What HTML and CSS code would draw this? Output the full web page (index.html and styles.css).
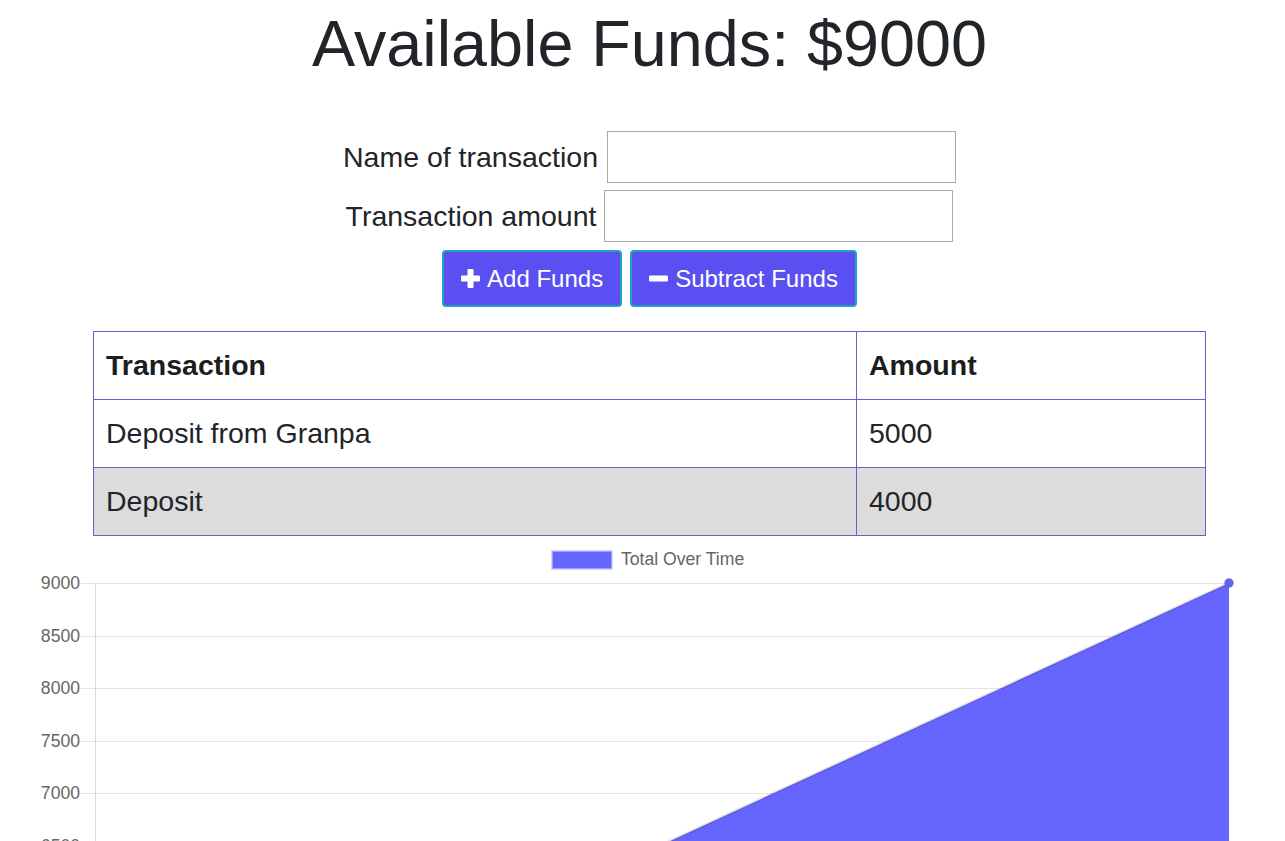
FILE: index.html
```html
<!DOCTYPE html>
<html lang="en">
<head>
<meta charset="utf-8">
<title>Budget Tracker</title>
<link rel="stylesheet" href="styles.css">
</head>
<body>
<div class="page">
  <h1 class="title">Available Funds: $9000</h1>
  <form class="form">
    <div class="form-row">
      <label class="label" for="t-name">Name of transaction</label>
      <input class="input" id="t-name" type="text">
    </div>
    <div class="form-row narrow">
      <label class="label" for="t-amount">Transaction amount</label>
      <input class="input" id="t-amount" type="number">
    </div>
    <div class="btn-row">
      <button type="button" class="btn">
        <svg class="ico" width="19" height="19" viewBox="0 0 19 19"><rect x="6.5" y="0" width="6" height="19" rx="1.2" fill="#fff"/><rect x="0" y="6.5" width="19" height="6" rx="1.2" fill="#fff"/></svg>
        <span>Add Funds</span>
      </button>
      <button type="button" class="btn">
        <svg class="ico" width="19" height="19" viewBox="0 0 19 19"><rect x="0" y="6.5" width="19" height="6" rx="1.2" fill="#fff"/></svg>
        <span>Subtract Funds</span>
      </button>
    </div>
  </form>
  <table class="table">
    <thead>
      <tr><th class="col-a">Transaction</th><th class="col-b">Amount</th></tr>
    </thead>
    <tbody>
      <tr><td>Deposit from Granpa</td><td>5000</td></tr>
      <tr class="alt"><td>Deposit</td><td>4000</td></tr>
    </tbody>
  </table>
</div>
<div class="chart">
  <svg class="chart-svg" width="1285" height="330" viewBox="0 0 1285 330">
    <rect x="552.5" y="15.5" width="59" height="17" fill="#6666ff" stroke="rgba(102,102,255,0.25)" stroke-width="3"/>
    <text x="621" y="29" class="legend">Total Over Time</text>
    <g stroke="#e5e5e5" stroke-width="1">
      <line x1="81" y1="47.5" x2="1229" y2="47.5"/>
      <line x1="81" y1="100.5" x2="1229" y2="100.5"/>
      <line x1="81" y1="152.5" x2="1229" y2="152.5"/>
      <line x1="81" y1="205.5" x2="1229" y2="205.5"/>
      <line x1="81" y1="257.5" x2="1229" y2="257.5"/>
      <line x1="81" y1="310.5" x2="1229" y2="310.5"/>
    </g>
    <line x1="95.5" y1="47" x2="95.5" y2="330" stroke="#d9d9d9" stroke-width="1"/>
    <g class="ticks">
      <text x="80" y="53">9000</text>
      <text x="80" y="106">8500</text>
      <text x="80" y="158">8000</text>
      <text x="80" y="211">7500</text>
      <text x="80" y="263">7000</text>
      <text x="80" y="316">6500</text>
    </g>
    <polygon points="1229,47 616,330 1229,330" fill="#6666ff"/>
    <line x1="1229" y1="47" x2="616" y2="330" stroke="rgba(0,0,0,0.1)" stroke-width="3"/>
    <circle cx="1229" cy="47" r="4.5" fill="#6363f2" stroke="rgba(0,0,0,0.1)" stroke-width="1"/>
  </svg>
</div>
</body>
</html>
```

FILE: styles.css
```css
html, body {
  margin: 0;
  padding: 0;
  background: #fff;
}

body {
  font-family: "Liberation Sans", Arial, sans-serif;
  color: #212529;
  overflow-x: hidden;
}

.page {
  padding-left: 14px;
}

.title {
  margin: 5px 0 0;
  font-size: 64.7px;
  font-weight: 400;
  line-height: 78px;
  text-align: center;
  color: #212529;
}

.form {
  margin-top: 48px;
  display: flex;
  flex-direction: column;
  align-items: center;
  gap: 7px;
}

.form-row {
  display: flex;
  align-items: center;
  justify-content: center;
  gap: 9px;
  height: 52px;
}

.form-row.narrow {
  gap: 8px;
}

.label {
  font-size: 28.5px;
  line-height: 1.5;
}

.input {
  box-sizing: border-box;
  width: 349px;
  height: 52px;
  margin: 0;
  border: 1px solid #a9a9a9;
  font-size: 24px;
  padding: 4px 8px;
  font-family: inherit;
  background: #fff;
  outline: none;
}

.input::-webkit-outer-spin-button,
.input::-webkit-inner-spin-button {
  -webkit-appearance: none;
  margin: 0;
}

.btn-row {
  display: flex;
  justify-content: center;
  gap: 8px;
  margin-top: 1px;
}

.btn {
  display: flex;
  align-items: center;
  gap: 7px;
  box-sizing: border-box;
  height: 57px;
  padding: 0 17px;
  background: #5a50f2;
  border: 2px solid #22a2bf;
  border-radius: 4px;
  color: #fff;
  font-family: inherit;
  font-size: 24px;
  line-height: 1.5;
  cursor: pointer;
}

.ico {
  display: block;
  flex: none;
}

.table {
  margin: 24px auto 0;
  width: 1113px;
  border-collapse: collapse;
  font-size: 28.5px;
  line-height: 1.5;
  color: #212529;
}

.table th,
.table td {
  border: 1px solid #6a5fcb;
  padding: 12px;
  text-align: left;
  vertical-align: top;
  height: 43px;
}

.table th {
  font-weight: 700;
  color: #1b1e21;
}

.col-a {
  width: 738px;
}

.table .alt td {
  background: #dcdcdc;
}

.chart {
  width: 1285px;
}

.chart-svg {
  display: block;
  font-family: "Liberation Sans", Arial, sans-serif;
}

.legend {
  font-size: 17.6px;
  fill: #666;
}

.ticks text {
  font-size: 17.6px;
  fill: #666;
  text-anchor: end;
}
```
